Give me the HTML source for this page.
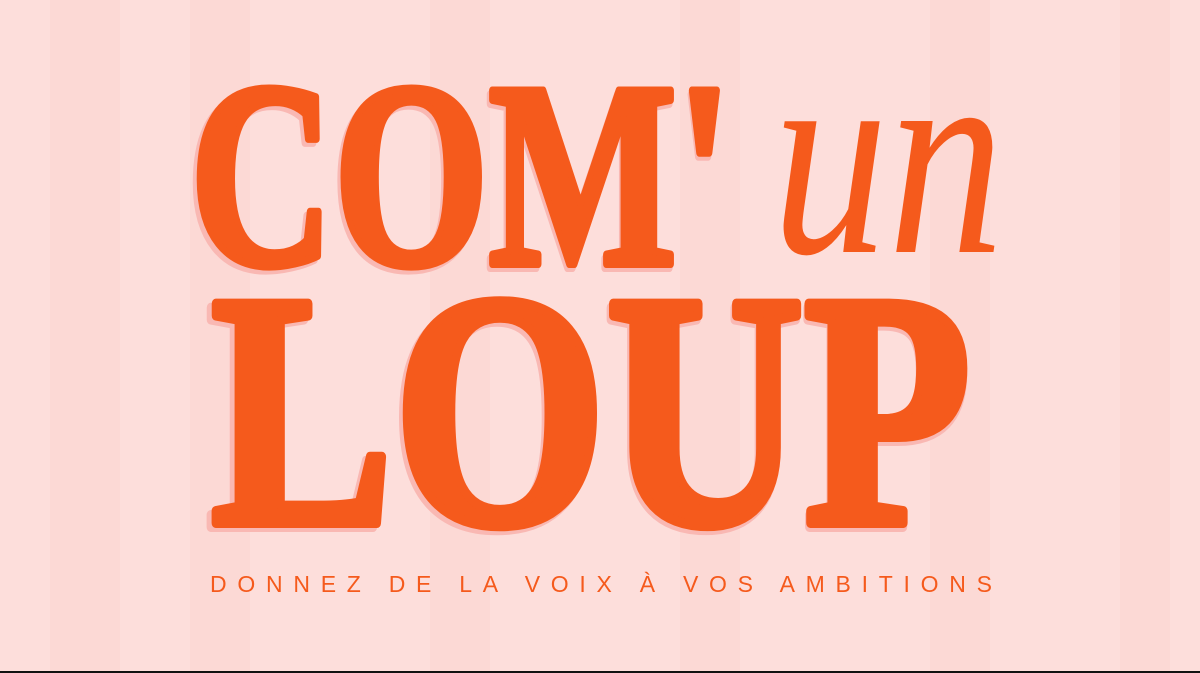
<!DOCTYPE html>
<html><head><meta charset="utf-8"><style>
html,body{margin:0;padding:0;}
body{width:1200px;height:673px;overflow:hidden;background:#fddedb;}
svg{display:block}
</style></head><body>
<svg width="1200" height="673" viewBox="0 0 1200 673" xmlns="http://www.w3.org/2000/svg">
<rect width="1200" height="673" fill="#fddedb"/>
<g fill="#fcd9d5">
<rect x="50" y="0" width="70" height="671"/><rect x="190" y="0" width="60" height="671"/>
<rect x="430" y="0" width="60" height="671"/><rect x="680" y="0" width="60" height="671"/>
<rect x="930" y="0" width="60" height="671"/><rect x="1120" y="0" width="50" height="671"/>
</g>
<g font-family="Liberation Serif, serif" font-weight="bold" stroke-linejoin="round">
<text x="186" y="268" font-size="265" fill="#f9b8b3" stroke="#f9b8b3" stroke-width="8" textLength="545" lengthAdjust="spacingAndGlyphs">COM'</text>
<text x="190" y="264" font-size="265" fill="#f55a1c" stroke="#f55a1c" stroke-width="8" textLength="542" lengthAdjust="spacingAndGlyphs">COM'</text>
<text x="206" y="527" font-size="335" fill="#f9b8b3" stroke="#f9b8b3" stroke-width="10" textLength="765" lengthAdjust="spacingAndGlyphs">LOUP</text>
<text x="211" y="523" font-size="335" fill="#f55a1c" stroke="#f55a1c" stroke-width="10" textLength="760" lengthAdjust="spacingAndGlyphs">LOUP</text>
</g>
<text x="772" y="252" font-family="Liberation Serif, serif" font-style="italic" font-size="285" fill="#f55a1c" textLength="232" lengthAdjust="spacingAndGlyphs">un</text>
<text x="210" y="592" font-family="Liberation Sans, sans-serif" font-size="23" fill="#f55a1c" textLength="782" lengthAdjust="spacing">DONNEZ DE LA VOIX À VOS AMBITIONS</text>
<rect x="0" y="671" width="1200" height="2" fill="#111"/>
</svg>
</body></html>
